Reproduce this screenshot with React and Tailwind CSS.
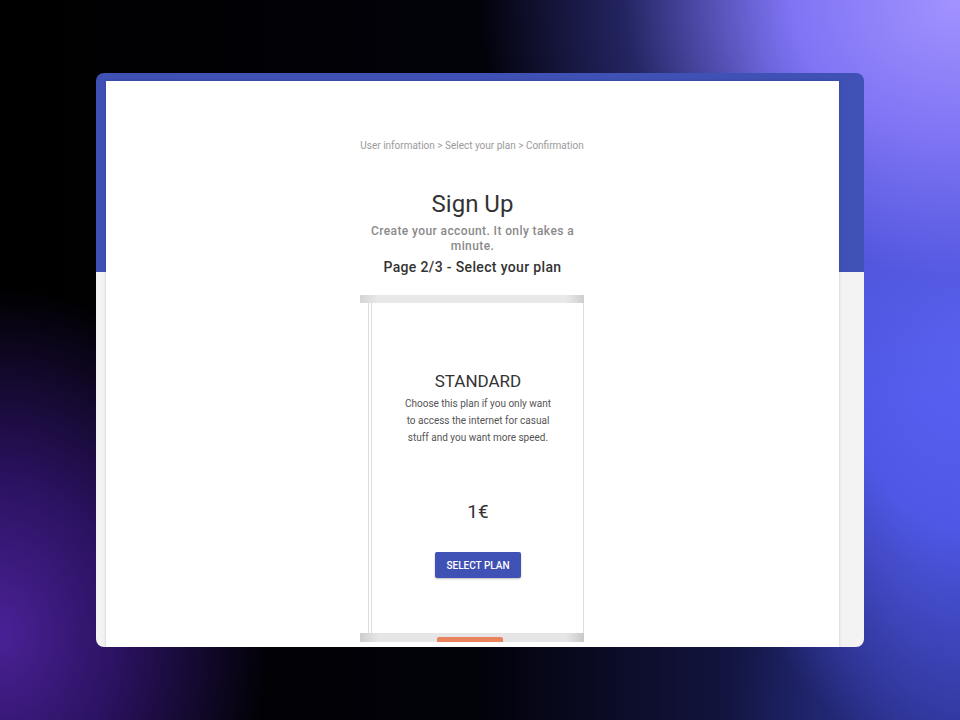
import React from 'react'

const font = { fontFamily: 'Roboto, "Noto Sans", Arial, sans-serif' }

const PlanCard = ({ name, description, price }) => (
  <div className="w-[224px] flex flex-col">
    {/* top scroll track */}
    <div className="h-[8px] bg-[linear-gradient(90deg,#d4d4d4,#e8e8e8_8%,#e8e8e8_92%,#cfcfcf)]" />
    <div className="flex flex-1">
      <div className="w-[8px]" />
      <div className="w-[4px] border-x border-[#dcdcdc]" />
      <div className="flex-1 bg-white border-r border-[#dedede] flex flex-col items-center pt-[68px] pl-[2px]">
        <h3 className="text-[17px] leading-[20px] font-normal text-[#333]">{name}</h3>
        <p className="mt-[4px] w-[150px] text-center text-[10px] leading-[17px] text-[#555]">
          {description}
        </p>
        <div className="mt-[54px] text-[19px] leading-[24px] font-normal text-[#333]">{price}</div>
        <button className="mt-[28px] w-[86px] h-[26px] rounded-[2px] bg-[#3f51b5] text-white text-[10px] font-medium shadow-[0_1px_2px_rgba(0,0,0,0.25)]">
          SELECT PLAN
        </button>
      </div>
    </div>
    {/* bottom scroll track */}
    <div className="h-[9px] flex items-end bg-[linear-gradient(90deg,#cdcdcd,#e6e6e6_8%,#e6e6e6_92%,#c8c8c8)]">
      <div className="ml-[77px] w-[66px] h-[5px] rounded-t-[2px] bg-[#e9845c]" />
    </div>
  </div>
)

export default function App() {
  return (
    <div
      style={font}
      className="w-[960px] h-[720px] overflow-hidden pt-[73px] pl-[96px] bg-black bg-[radial-gradient(ellipse_50%_55%_at_100%_0%,#a293ff_0%,#7f74f4_35%,rgba(80,80,200,0.35)_70%,transparent_100%),radial-gradient(ellipse_28%_62%_at_100%_45%,#5962f4_0%,#4f58e6_45%,transparent_100%),radial-gradient(ellipse_24%_40%_at_100%_100%,#2a3290_0%,transparent_100%),radial-gradient(ellipse_28%_48%_at_0%_88%,#4a2196_0%,#2a1260_45%,transparent_100%),linear-gradient(90deg,#000_0%,#02020a_50%,#12143e_75%,#262a80_100%)]"
    >
      <div className="w-[768px] h-[574px] rounded-[8px] overflow-hidden bg-[linear-gradient(#3f51b5_0px,#3f51b5_199px,#f3f3f3_199px)] pl-[10px] pt-[8px]">
        <div className="w-[733px] h-[566px] bg-white shadow-[0_0_3px_rgba(0,0,0,0.18)] flex flex-col items-center">
          <div className="mt-[59px] -ml-[1px] text-[10px] leading-[12px] text-[#9a9a9a]">
            User information &gt; Select your plan &gt; Confirmation
          </div>
          <h1 className="mt-[38px] text-[24px] leading-[28px] text-[#333]">Sign Up</h1>
          <p className="mt-[6px] w-[224px] text-center text-[12px] leading-[15px] font-medium tracking-[0.4px] text-[#8a8a8a]">
            Create your account. It only takes a minute.
          </p>
          <h2 className="mt-[4px] text-[14px] leading-[18px] font-medium tracking-[0.35px] text-[#333]">
            Page 2/3 - Select your plan
          </h2>
          <div className="mt-[19px] -ml-[2px] flex h-[347px]">
            <PlanCard
              name="STANDARD"
              description="Choose this plan if you only want to access the internet for casual stuff and you want more speed."
              price="1€"
            />
          </div>
        </div>
      </div>
    </div>
  )
}
